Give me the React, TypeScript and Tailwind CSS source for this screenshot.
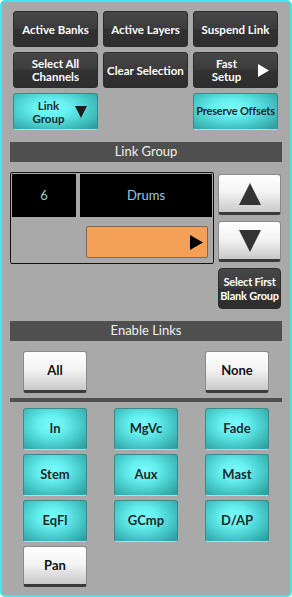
import React from "react";

const font = { fontFamily: 'Lato, "Liberation Sans", sans-serif' };

function Tri({ dir, className }: { dir: "up" | "down" | "right"; className: string }) {
  const pts = dir === "up" ? "0,10 5,0 10,10" : dir === "down" ? "0,0 10,0 5,10" : "0,0 10,5 0,10";
  return (
    <svg viewBox="0 0 10 10" className={className} preserveAspectRatio="none">
      <polygon points={pts} fill="currentColor" />
    </svg>
  );
}

function DarkBtn({ children, className = "" }: { children: React.ReactNode; className?: string }) {
  return (
    <div
      className={
        "flex items-center justify-center whitespace-nowrap rounded-[3px] border border-[#2c2c2c] bg-[linear-gradient(180deg,#474747_0%,#3c3c3c_48%,#323232_52%,#2e2e2e_100%)] text-center font-bold leading-[13px] text-white " +
        className
      }
    >
      {children}
    </div>
  );
}

function CyanBtn({ children, className = "" }: { children: React.ReactNode; className?: string }) {
  return (
    <div
      className={
        "flex items-center justify-center whitespace-nowrap rounded-[3px] border border-[#3a8a8a] border-b-[#6ff] bg-[radial-gradient(ellipse_at_45%_40%,#7cfdfd_0%,#66f0f0_28%,#46c8c8_62%,#2a9696_100%)] text-center font-bold text-[#1e2a2a] " +
        className
      }
    >
      {children}
    </div>
  );
}

function WhiteBtn({ children, className = "" }: { children: React.ReactNode; className?: string }) {
  return (
    <div
      className={
        "flex items-center justify-center rounded-[3px] border border-[#8a8a8a] border-b-[3px] border-b-[#3a3a3a] bg-[linear-gradient(180deg,#ffffff_0%,#f4f4f4_45%,#c9c9c9_100%)] text-center font-bold text-[#111] " +
        className
      }
    >
      {children}
    </div>
  );
}

function Header({ title }: { title: string }) {
  return (
    <div className="mx-[8px] flex h-[20px] items-center justify-center bg-[#4f4f4f] text-[13px] text-[#f0f0f0]">
      {title}
    </div>
  );
}

export default function App() {
  const grid = ["In", "MgVc", "Fade", "Stem", "Aux", "Mast", "EqFl", "GCmp", "D/AP"];
  return (
    <div style={font} className="h-[597px] w-[292px] overflow-hidden rounded-[5px] border-2 border-[#40e8e8] bg-[#a9a9a9]">
      <div className="grid grid-cols-[85px_85px_85px] gap-[5px] px-[11px] pt-[9px]">
        <DarkBtn className="h-[36px] text-[11.5px]">Active Banks</DarkBtn>
        <DarkBtn className="h-[36px] text-[11.5px]">Active Layers</DarkBtn>
        <DarkBtn className="h-[36px] text-[11.5px]">Suspend Link</DarkBtn>
        <DarkBtn className="h-[36px] text-[11.5px]">
          Select All
          <br />
          Channels
        </DarkBtn>
        <DarkBtn className="h-[36px] text-[11.5px]">Clear Selection</DarkBtn>
        <DarkBtn className="relative h-[36px] text-[11.5px]">
          <span className="mr-[18px]">
            Fast
            <br />
            Setup
          </span>
          <Tri dir="right" className="absolute right-[8px] top-[11px] h-[13px] w-[11px] text-white" />
        </DarkBtn>
        <CyanBtn className="relative h-[37px] text-[11.5px] leading-[13px]">
          <span className="mr-[14px]">
            Link
            <br />
            Group
          </span>
          <Tri dir="down" className="absolute right-[10px] top-[12px] h-[12px] w-[12px] text-[#1e1e1e]" />
        </CyanBtn>
        <div />
        <CyanBtn className="h-[37px] text-[11px] tracking-[-0.2px]">Preserve Offsets</CyanBtn>
      </div>

      <div className="mt-[12px]">
        <Header title="Link Group" />
      </div>

      <div className="mt-[10px] flex gap-[4px] pl-[8px]">
        <div className="h-[92px] w-[204px] rounded-[2px] border border-[#111] p-[1px]">
          <div className="flex h-[43px] gap-[4px]">
            <div className="flex w-[64px] items-center justify-center bg-black text-[13px] text-[#9cc8e0]">6</div>
            <div className="flex flex-1 items-center justify-center bg-black text-[13px] text-[#9cc8e0]">Drums</div>
          </div>
          <div className="mt-[9px] flex justify-end pr-[4px]">
            <div className="flex h-[32px] w-[122px] items-center justify-end rounded-[2px] border border-[#7a6a5a] bg-[#f4a056] pr-[4px]">
              <Tri dir="right" className="h-[15px] w-[13px] text-black" />
            </div>
          </div>
        </div>
        <div className="flex w-[63px] flex-col gap-[6px] pt-[2px]">
          <WhiteBtn className="h-[41px]">
            <Tri dir="up" className="h-[22px] w-[22px] text-[#333]" />
          </WhiteBtn>
          <WhiteBtn className="h-[41px]">
            <Tri dir="down" className="h-[22px] w-[22px] text-[#333]" />
          </WhiteBtn>
          <DarkBtn className="h-[41px] rounded-[4px] text-[11px] leading-[14px] tracking-[-0.2px]">
            Select First
            <br />
            Blank Group
          </DarkBtn>
        </div>
      </div>

      <div className="mt-[12px]">
        <Header title="Enable Links" />
      </div>

      <div className="mt-[10px] flex justify-between px-[21px]">
        <WhiteBtn className="h-[42px] w-[64px] text-[13px]">All</WhiteBtn>
        <WhiteBtn className="h-[42px] w-[64px] text-[13px]">None</WhiteBtn>
      </div>

      <div className="mx-[8px] mt-[5px] h-[4px] bg-[#4f4f4f]" />

      <div className="mt-[6px] grid grid-cols-[64px_64px_64px] justify-between gap-y-[4px] px-[21px]">
        {grid.map((g) => (
          <CyanBtn key={g} className="h-[42px] text-[13px]">
            {g}
          </CyanBtn>
        ))}
        <WhiteBtn className="h-[41px] text-[13px]">Pan</WhiteBtn>
      </div>
    </div>
  );
}
